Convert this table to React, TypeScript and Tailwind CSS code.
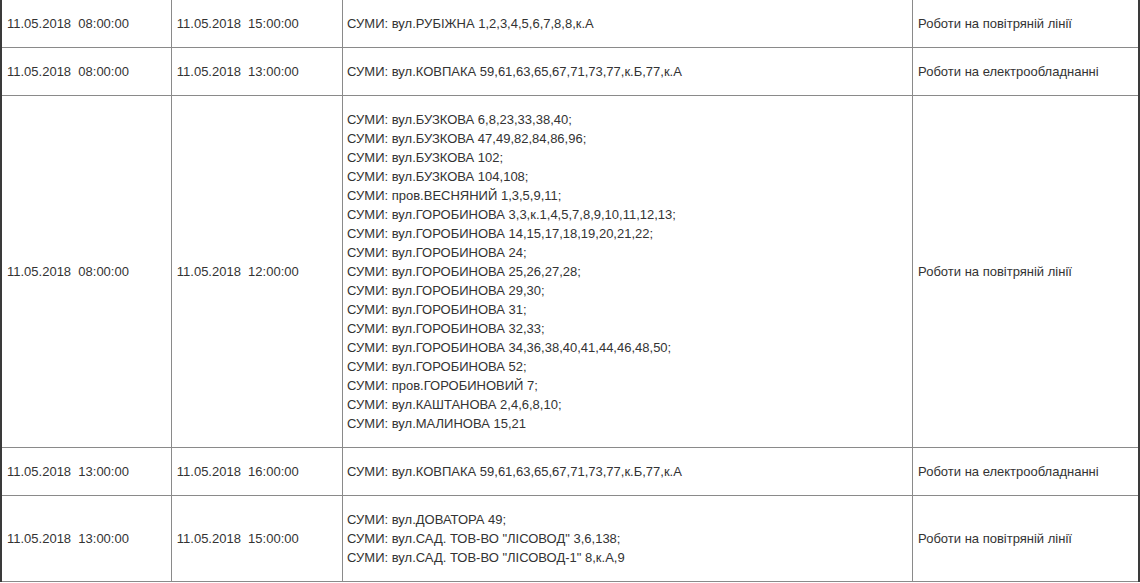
import React from "react";

interface Outage {
  start: string;
  end: string;
  addresses: string[];
  kind: string;
}

const OUTAGES: Outage[] = [
  {
    start: "11.05.2018\u00a0 08:00:00",
    end: "11.05.2018\u00a0 15:00:00",
    addresses: ["СУМИ: вул.РУБІЖНА 1,2,3,4,5,6,7,8,8,к.А"],
    kind: "Роботи на повітряній лінії",
  },
  {
    start: "11.05.2018\u00a0 08:00:00",
    end: "11.05.2018\u00a0 13:00:00",
    addresses: ["СУМИ: вул.КОВПАКА 59,61,63,65,67,71,73,77,к.Б,77,к.А"],
    kind: "Роботи на електрообладнанні",
  },
  {
    start: "11.05.2018\u00a0 08:00:00",
    end: "11.05.2018\u00a0 12:00:00",
    addresses: [
      "СУМИ: вул.БУЗКОВА 6,8,23,33,38,40;",
      "СУМИ: вул.БУЗКОВА 47,49,82,84,86,96;",
      "СУМИ: вул.БУЗКОВА 102;",
      "СУМИ: вул.БУЗКОВА 104,108;",
      "СУМИ: пров.ВЕСНЯНИЙ 1,3,5,9,11;",
      "СУМИ: вул.ГОРОБИНОВА 3,3,к.1,4,5,7,8,9,10,11,12,13;",
      "СУМИ: вул.ГОРОБИНОВА 14,15,17,18,19,20,21,22;",
      "СУМИ: вул.ГОРОБИНОВА 24;",
      "СУМИ: вул.ГОРОБИНОВА 25,26,27,28;",
      "СУМИ: вул.ГОРОБИНОВА 29,30;",
      "СУМИ: вул.ГОРОБИНОВА 31;",
      "СУМИ: вул.ГОРОБИНОВА 32,33;",
      "СУМИ: вул.ГОРОБИНОВА 34,36,38,40,41,44,46,48,50;",
      "СУМИ: вул.ГОРОБИНОВА 52;",
      "СУМИ: пров.ГОРОБИНОВИЙ 7;",
      "СУМИ: вул.КАШТАНОВА 2,4,6,8,10;",
      "СУМИ: вул.МАЛИНОВА 15,21",
    ],
    kind: "Роботи на повітряній лінії",
  },
  {
    start: "11.05.2018\u00a0 13:00:00",
    end: "11.05.2018\u00a0 16:00:00",
    addresses: ["СУМИ: вул.КОВПАКА 59,61,63,65,67,71,73,77,к.Б,77,к.А"],
    kind: "Роботи на електрообладнанні",
  },
  {
    start: "11.05.2018\u00a0 13:00:00",
    end: "11.05.2018\u00a0 15:00:00",
    addresses: [
      "СУМИ: вул.ДОВАТОРА 49;",
      "СУМИ: вул.САД. ТОВ-ВО \"ЛІСОВОД\" 3,6,138;",
      "СУМИ: вул.САД. ТОВ-ВО \"ЛІСОВОД-1\" 8,к.А,9",
    ],
    kind: "Роботи на повітряній лінії",
  },
];

export default function App() {
  return (
    <div className="h-[583px] w-[1140px] overflow-hidden bg-white font-['Liberation_Sans',Arial,sans-serif] text-[13px] leading-[19px] text-[#333]">
      <table className="w-[1140px] table-fixed border-collapse border-l-2 border-r-2 border-l-[#3a3a3a] border-r-[#3a3a3a]">
        <colgroup>
          <col className="w-[170px]" />
          <col className="w-[171px]" />
          <col className="w-[569px]" />
          <col className="w-[226px]" />
        </colgroup>
        <tbody>
          {OUTAGES.map((row, index) => (
            <tr key={index} className="border-b border-[#8a8a8a]">
              <td className="border-r border-[#8a8a8a] py-[14px] pl-[5px] align-middle whitespace-nowrap">
                {row.start}
              </td>
              <td className="border-r border-[#8a8a8a] py-[14px] pl-[5px] align-middle whitespace-nowrap">
                {row.end}
              </td>
              <td className="border-r border-[#8a8a8a] py-[14px] pl-[4px] align-middle">
                {row.addresses.map((line) => (
                  <div key={line} className="whitespace-nowrap">
                    {line}
                  </div>
                ))}
              </td>
              <td className="py-[14px] pl-[5px] align-middle whitespace-nowrap">{row.kind}</td>
            </tr>
          ))}
        </tbody>
      </table>
    </div>
  );
}
